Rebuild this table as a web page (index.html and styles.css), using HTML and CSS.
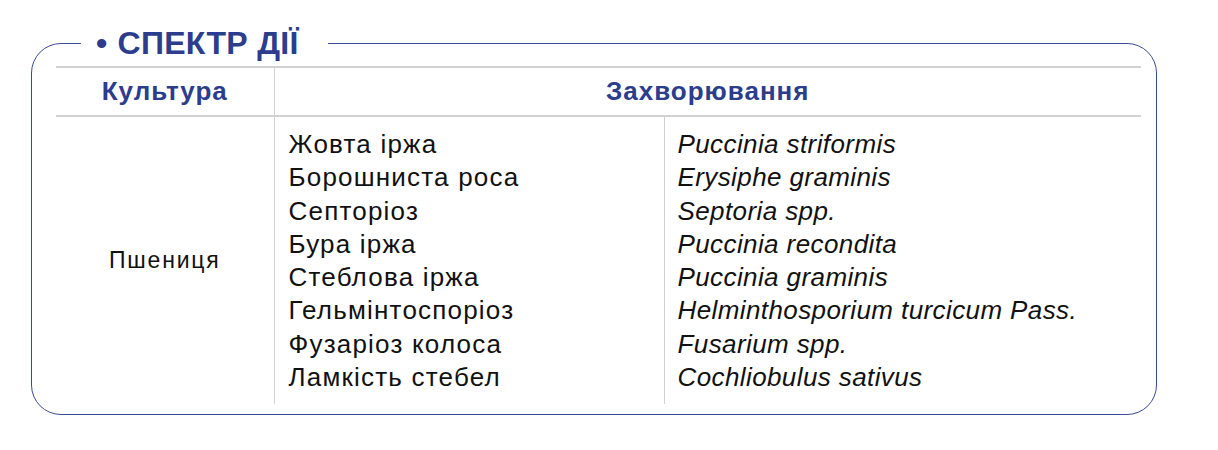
FILE: index.html
```html
<!DOCTYPE html>
<html lang="uk">
<head>
<meta charset="utf-8">
<title>Спектр дії</title>
<link rel="stylesheet" href="styles.css">
</head>
<body>
<fieldset class="panel">
  <legend class="panel-title"><span class="bullet">•</span>СПЕКТР ДІЇ</legend>
  <table class="spectrum">
    <colgroup>
      <col class="col-crop">
      <col class="col-name">
      <col class="col-latin">
    </colgroup>
    <thead>
      <tr>
        <th class="th-crop">Культура</th>
        <th class="th-disease" colspan="2">Захворювання</th>
      </tr>
    </thead>
    <tbody>
      <tr>
        <td class="td-crop">Пшениця</td>
        <td class="td-name">
          <div class="line">Жовта іржа</div>
          <div class="line">Борошниста роса</div>
          <div class="line">Септоріоз</div>
          <div class="line">Бура іржа</div>
          <div class="line">Стеблова іржа</div>
          <div class="line">Гельмінтоспоріоз</div>
          <div class="line">Фузаріоз колоса</div>
          <div class="line">Ламкість стебел</div>
        </td>
        <td class="td-latin">
          <div class="line">Puccinia striformis</div>
          <div class="line">Erysiphe graminis</div>
          <div class="line">Septoria spp.</div>
          <div class="line">Puccinia recondita</div>
          <div class="line">Puccinia graminis</div>
          <div class="line">Helminthosporium turcicum Pass.</div>
          <div class="line">Fusarium spp.</div>
          <div class="line">Cochliobulus sativus</div>
        </td>
      </tr>
    </tbody>
  </table>
</fieldset>
</body>
</html>
```
FILE: styles.css
```css
html, body {
  margin: 0;
  padding: 0;
  background: #ffffff;
}

body {
  font-family: "Liberation Sans", Arial, sans-serif;
  color: #111111;
}

.panel {
  box-sizing: border-box;
  width: 1126px;
  height: 389px;
  margin: 26px 0 0 31px;
  padding: 6px 16px 0 24px;
  border: 1.5px solid #3b4a98;
  border-radius: 30px;
  min-inline-size: 0;
}

.panel-title {
  margin-left: 25px;
  padding: 0 29px 0 15px;
  font-size: 32px;
  line-height: 34px;
  font-weight: bold;
  color: #2c3d8d;
  letter-spacing: 0.3px;
}

.bullet {
  margin-right: 10px;
}

.spectrum {
  width: 1085px;
  border-collapse: collapse;
  table-layout: fixed;
}

.col-crop { width: 218px; }
.col-name { width: 390px; }
.col-latin { width: 477px; }

.spectrum th {
  height: 47px;
  padding: 0;
  border-top: 2px solid #d2d2d2;
  border-bottom: 2px solid #d2d2d2;
  font-size: 26px;
  font-weight: bold;
  color: #2c3d8d;
  letter-spacing: 1px;
  text-align: center;
  vertical-align: middle;
}

.th-crop {
  border-right: 1.5px solid #d2d2d2;
}

.spectrum td {
  padding: 11px 0 10px 14px;
  vertical-align: top;
  font-size: 26px;
  line-height: 33.3px;
}

.td-crop {
  border-right: 1.5px solid #d2d2d2;
  text-align: center;
  font-size: 23px !important;
  letter-spacing: 1.8px;
  vertical-align: middle !important;
  padding: 0 !important;
}

.td-name {
  border-right: 1.5px solid #d2d2d2;
  letter-spacing: 1.2px;
}

.td-latin {
  font-style: italic;
  letter-spacing: 0.4px;
  padding-left: 13px !important;
}

.line {
  white-space: nowrap;
}
```
